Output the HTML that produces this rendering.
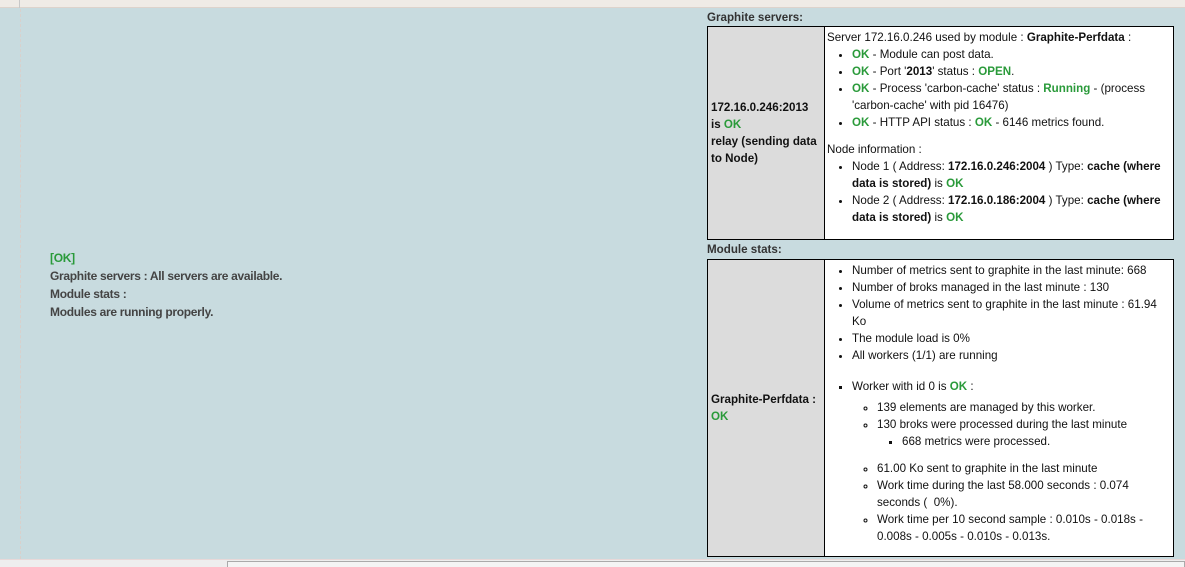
<!DOCTYPE html>
<html><head><meta charset="utf-8"><style>
*{margin:0;padding:0;box-sizing:border-box}
body{width:1185px;height:567px;overflow:hidden;background:#c8dbdf;font-family:"Liberation Sans",sans-serif;font-size:11.6px;color:#111;position:relative}
.top{position:absolute;left:0;top:0;width:1185px;height:8px;background:#efebe6;border-bottom:1px solid #ddd3cc}
.top i{position:absolute;left:19px;top:0;width:1px;height:8px;background:#c8c8c8}
.dash{position:absolute;left:20px;top:9px;height:550px;border-left:1px dashed #d8d0cc}
.bot{position:absolute;left:0;top:559px;width:1185px;height:8px;background:#eee;border-top:1px solid #e8d8d8}
.thumb{position:absolute;left:227px;top:561px;width:958px;height:6px;border:1px solid #aaa;border-bottom:none;background:#f4f4f4}
.left{position:absolute;left:50px;top:249px;line-height:18px;font-weight:bold;color:#444;font-size:12px;letter-spacing:-0.3px}
.g{color:#2a9a3a;font-weight:bold}
.h{position:absolute;left:707px;font-weight:bold;color:#333;line-height:14px}
table{position:absolute;left:707px;width:467px;border-collapse:collapse}
td{border:1px solid #000;vertical-align:middle;line-height:17px}
td.l{width:117px;background:#dcdcdc;font-weight:bold;padding:0 3px}
td.r{background:#fff;padding:2px 2px 2px 2px;vertical-align:top}
ul{margin-left:25px}
ul ul{margin-left:25px;list-style:circle}
ul ul ul{list-style:square}
b{font-weight:bold}
</style></head><body>
<div class="top"><i></i></div>
<div class="dash"></div>
<div class="left"><span class="g">[OK]</span><br>Graphite servers : All servers are available.<br>Module stats :<br>Modules are running properly.</div>
<div class="h" style="top:11px">Graphite servers:</div>
<table style="top:26px;height:214px"><tr><td class="l">172.16.0.246:2013<br>is <span class="g">OK</span><br>relay (sending data to Node)</td>
<td class="r">Server 172.16.0.246 used by module : <b>Graphite-Perfdata</b> :
<ul><li><span class="g">OK</span> - Module can post data.</li>
<li><span class="g">OK</span> - Port '<b>2013</b>' status : <span class="g">OPEN</span>.</li>
<li><span class="g">OK</span> - Process 'carbon-cache' status : <span class="g">Running</span> - (process<br>'carbon-cache' with pid 16476)</li>
<li><span class="g">OK</span> - HTTP API status : <span class="g">OK</span> - 6146 metrics found.</li></ul>
<div style="margin-top:10px">Node information :</div>
<ul><li>Node 1 ( Address: <b>172.16.0.246:2004</b> ) Type: <b>cache (where<br>data is stored)</b> is <span class="g">OK</span></li>
<li>Node 2 ( Address: <b>172.16.0.186:2004</b> ) Type: <b>cache (where<br>data is stored)</b> is <span class="g">OK</span></li></ul>
</td></tr></table>
<div class="h" style="top:243px">Module stats:</div>
<table style="top:259px;height:298px"><tr><td class="l">Graphite-Perfdata :<br><span class="g">OK</span></td>
<td class="r">
<ul><li>Number of metrics sent to graphite in the last minute: 668</li>
<li>Number of broks managed in the last minute : 130</li>
<li>Volume of metrics sent to graphite in the last minute : 61.94<br>Ko</li>
<li>The module load is 0%</li>
<li>All workers (1/1) are running</li></ul>
<ul style="margin-top:14px;list-style:square"><li>Worker with id 0 is <span class="g">OK</span> :
<ul style="margin-top:4px;list-style:circle"><li>139 elements are managed by this worker.</li>
<li>130 broks were processed during the last minute<ul style="list-style:square"><li>668 metrics were processed.</li></ul><div style="height:10px"></div></li>
<li>61.00 Ko sent to graphite in the last minute</li>
<li>Work time during the last 58.000 seconds : 0.074<br>seconds ( &nbsp;0%).</li>
<li>Work time per 10 second sample : 0.010s - 0.018s -<br>0.008s - 0.005s - 0.010s - 0.013s.</li></ul></li></ul>
</td></tr></table>
<div class="bot"></div><div class="thumb"></div>
</body></html>
